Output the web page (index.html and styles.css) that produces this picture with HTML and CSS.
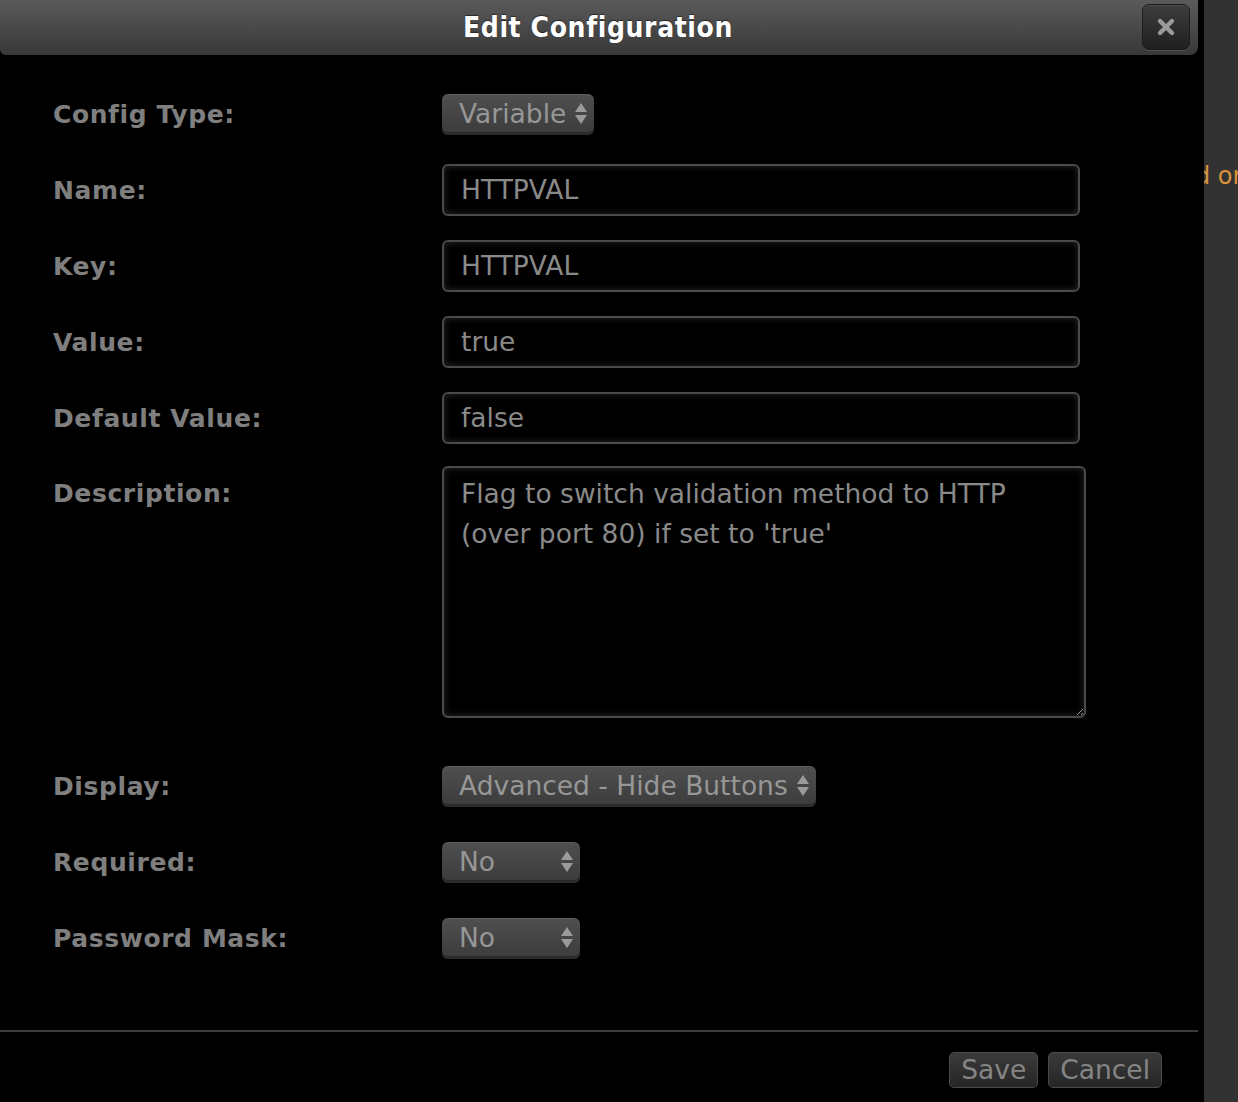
FILE: index.html
```html
<!DOCTYPE html>
<html>
<head>
<meta charset="utf-8">
<title>Edit Configuration</title>
<link rel="stylesheet" href="styles.css">
</head>
<body>
<div class="page">
  <div class="dialog">
    <div class="header">
      <h1 class="title">Edit Configuration</h1>
      <button class="close" type="button" aria-label="Close">
        <svg width="20" height="20" viewBox="0 0 20 20"><path d="M4 4 L16 16 M16 4 L4 16" stroke="#9a9a9a" stroke-width="4.4" stroke-linecap="round"/></svg>
      </button>
    </div>
    <form class="form">
      <div class="row">
        <label class="label">Config Type:</label>
        <div class="select sel-type"><span>Variable</span><i class="arrows"></i></div>
      </div>
      <div class="row">
        <label class="label">Name:</label>
        <div class="input">HTTPVAL</div>
      </div>
      <div class="row">
        <label class="label">Key:</label>
        <div class="input">HTTPVAL</div>
      </div>
      <div class="row">
        <label class="label">Value:</label>
        <div class="input">true</div>
      </div>
      <div class="row">
        <label class="label">Default Value:</label>
        <div class="input">false</div>
      </div>
      <div class="row row-desc">
        <label class="label">Description:</label>
        <textarea class="textarea">Flag to switch validation method to HTTP (over port 80) if set to 'true'</textarea>
      </div>
      <div class="row">
        <label class="label">Display:</label>
        <div class="select sel-display"><span>Advanced - Hide Buttons</span><i class="arrows"></i></div>
      </div>
      <div class="row">
        <label class="label">Required:</label>
        <div class="select sel-no"><span>No</span><i class="arrows"></i></div>
      </div>
      <div class="row">
        <label class="label">Password Mask:</label>
        <div class="select sel-no"><span>No</span><i class="arrows"></i></div>
      </div>
    </form>
    <div class="footer">
      <button class="btn" type="button">Save</button>
      <button class="btn" type="button">Cancel</button>
    </div>
  </div>
  <div class="aside"><span class="aside-text">d or</span></div>
</div>
</body>
</html>
```

FILE: styles.css
```css
html, body {
  margin: 0;
  padding: 0;
  background: #323232;
  height: 100%;
}
body {
  font-family: "DejaVu Sans", Verdana, sans-serif;
}
.page {
  display: flex;
  height: 1102px;
  overflow: hidden;
}
.dialog {
  width: 1204px;
  flex: none;
  background: #000;
  display: flex;
  flex-direction: column;
}
.header {
  width: 1198px;
  height: 55px;
  box-sizing: border-box;
  background: linear-gradient(#5a5a5a, #383838);
  border-radius: 0 0 8px 6px;
  display: flex;
  align-items: center;
  justify-content: center;
  position: relative;
}
.title {
  margin: 0;
  color: #fff;
  font-size: 28px;
  font-weight: bold;
  font-stretch: condensed;
  font-family: "DejaVu Sans Condensed", "DejaVu Sans", sans-serif;
  text-shadow: 0 -1px 1px rgba(0,0,0,0.5);
  letter-spacing: 0.6px;
  padding-right: 2px;
}
.close {
  position: absolute;
  right: 8px;
  top: 4px;
  width: 48px;
  height: 46px;
  padding: 0;
  border: 1px solid #1c1c1c;
  border-radius: 7px;
  background: linear-gradient(#3e3e3e, #1f1f1f);
  box-shadow: 0 1px 0 rgba(255,255,255,0.12), inset 0 1px 0 rgba(255,255,255,0.06);
  display: flex;
  align-items: center;
  justify-content: center;
}
.form {
  padding: 21px 0 0 53px;
  display: flex;
  flex-direction: column;
}
.row {
  display: grid;
  grid-template-columns: 389px auto;
  align-items: center;
  justify-items: start;
  height: 76px;
}
.label {
  color: #7f7f7f;
  font-size: 25px;
  font-weight: bold;
  letter-spacing: 0.6px;
}
.input {
  width: 638px;
  height: 52px;
  box-sizing: border-box;
  border: 2px solid #4a4a4a;
  border-radius: 6px;
  background: #000;
  box-shadow: inset 0 0 7px rgba(255,255,255,0.16);
  color: #8a8a8a;
  font-size: 26.5px;
  line-height: 48px;
  padding-left: 17px;
}
.row-desc {
  height: auto;
  align-items: start;
  padding-top: 10px;
  padding-bottom: 30px;
}
.row-desc .label {
  margin-top: 13px;
}
.textarea {
  width: 644px;
  height: 252px;
  box-sizing: border-box;
  border: 2px solid #4a4a4a;
  border-radius: 6px;
  background: #000;
  box-shadow: inset 0 0 7px rgba(255,255,255,0.16);
  color: #8a8a8a;
  font-family: "DejaVu Sans", Verdana, sans-serif;
  font-size: 26.5px;
  line-height: 40px;
  padding: 6px 17px;
  margin: 0;
  resize: both;
  outline: none;
  color-scheme: dark;
}
.select {
  height: 41px;
  box-sizing: border-box;
  border-radius: 6px;
  background: linear-gradient(#4f4f4f, #3b3b3b);
  box-shadow: inset 0 -3px 0 #2b2b2b, inset 0 1px 0 rgba(255,255,255,0.08);
  color: #979797;
  font-size: 26.5px;
  display: flex;
  align-items: center;
  justify-content: space-between;
  padding: 0 7px 2px 17px;
}
.sel-type { width: 152px; }
.sel-display { width: 374px; }
.sel-no { width: 138px; }
.arrows {
  display: flex;
  flex-direction: column;
  gap: 3px;
  align-items: center;
}
.arrows::before, .arrows::after {
  content: "";
  width: 0;
  height: 0;
  border-left: 6px solid transparent;
  border-right: 6px solid transparent;
}
.arrows::before { border-bottom: 9px solid #9a9a9a; }
.arrows::after { border-top: 9px solid #9a9a9a; }
.footer {
  margin-top: 54px;
  width: 1198px;
  border-top: 2px solid #3c3c3c;
  display: flex;
  justify-content: flex-end;
  gap: 10px;
  padding: 20px 36px 0 0;
  box-sizing: border-box;
}
.btn {
  height: 36px;
  padding: 0 11px;
  border: 1px solid #4a4a4a;
  border-radius: 5px;
  background: linear-gradient(#3a3a3a, #262626);
  color: #858585;
  font-family: "DejaVu Sans", Verdana, sans-serif;
  font-size: 26.5px;
  line-height: 34px;
}
.aside {
  flex: 1;
  overflow: hidden;
  padding-top: 162px;
}
.aside-text {
  display: block;
  margin-left: -9px;
  white-space: nowrap;
  color: #d8933c;
  font-size: 24px;
  font-family: "DejaVu Sans", Verdana, sans-serif;
}
```
